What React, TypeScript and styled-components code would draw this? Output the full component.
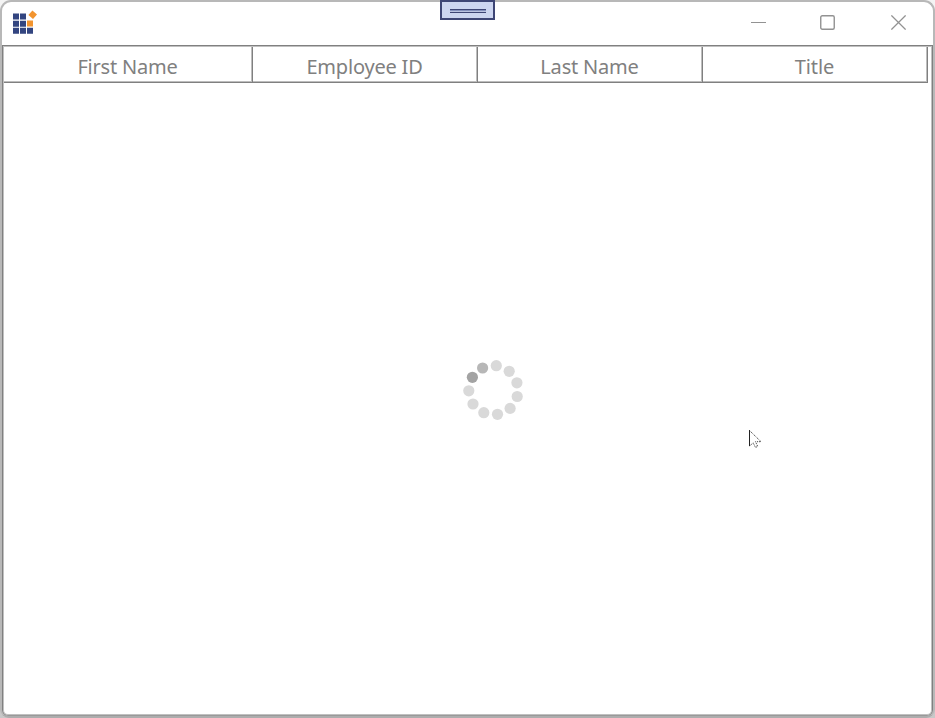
import React from "react";
import styled, { createGlobalStyle } from "styled-components";

const GlobalStyle = createGlobalStyle`
  html, body, #root { height: 100%; margin: 0; }
  body { background: linear-gradient(#f4f4f4, #f0f0f0 20%, #c8c8c8); overflow: hidden; font-family: "Noto Sans", "Open Sans", sans-serif; cursor: default; }
  * { box-sizing: border-box; }
`;

const WindowFrame = styled.main`
  position: relative;
  display: flex;
  flex-direction: column;
  width: 935px;
  height: 718px;
  border: 2px solid #b8b8b8;
  border-bottom-color: #adadad;
  border-radius: 11px 11px 9px 9px;
  background: #fff;
`;

const TitleBar = styled.header`
  display: flex;
  flex: 0 0 43px;
  justify-content: space-between;
`;

const AppIcon = styled.svg`
  width: 40px;
  height: 43px;
`;

const WindowControls = styled.div`
  display: flex;
  margin-right: -1px;
`;

const ControlButton = styled.button<{ $width: number }>`
  width: ${(p) => p.$width}px;
  height: 41px;
  padding: 0;
  border: 0;
  background: transparent;
  color: #929292;
  display: grid;
  place-items: center;

  svg { display: block; fill: none; stroke: currentColor; }
`;

const DebugHandle = styled.div`
  position: absolute;
  top: -2px;
  left: 438px;
  width: 55px;
  height: 20px;
  border: 2px solid #3d4575;
  background: #ccd5f0;
  display: flex;
  justify-content: center;
  padding-top: 7px;
`;

const Grip = styled.div`
  width: 36px;
  height: 4px;
  border-top: 1px solid #3d4575;
  border-bottom: 1px solid #3d4575;
  background: linear-gradient(#8490bd 50%, #bac3e1 50%);
`;

const DataGrid = styled.section`
  flex: 1;
  display: flex;
  flex-direction: column;
  border: 1px solid #808080;
  border-bottom: 1px solid #999;
  border-radius: 0 0 6px 6px;
  box-shadow: inset 0 0 0 1px #c0c0c0;
  padding: 1px;
`;

const HeaderRow = styled.div`
  display: grid;
  grid-template-columns: 249px repeat(3, 225px);
  height: 36px;
`;

const HeaderCell = styled.div`
  display: flex;
  align-items: center;
  justify-content: center;
  padding: 4px 1px 0 0;
  border-right: 1px solid #808080;
  border-bottom: 1px solid #808080;
  box-shadow: inset -1px -1px #bdbdbd;
  color: #808080;
`;

const HeaderLabel = styled.span<{ $spacing: number }>`
  font-size: 20px;
  line-height: 28px;
  letter-spacing: ${(p) => p.$spacing}px;
  white-space: nowrap;
`;

const GridBody = styled.div`
  flex: 1;
  padding: 270px 0 0 452px;
`;

const Spinner = styled.svg`
  display: block;
  width: 74px;
  height: 74px;
`;

const Pointer = styled.svg`
  position: absolute;
  left: 746px;
  top: 427px;
`;

const columns = [
  { label: "First Name", spacing: -0.2 },
  { label: "Employee ID", spacing: -0.2 },
  { label: "Last Name", spacing: -0.2 },
  { label: "Title", spacing: -0.1 },
];

const dots = [
  { x: 40.3, y: 12.7, tone: "#d9d9d9" },
  { x: 53.2, y: 18.3, tone: "#d9d9d9" },
  { x: 60.9, y: 29.8, tone: "#d9d9d9" },
  { x: 61.2, y: 43.5, tone: "#d9d9d9" },
  { x: 54.1, y: 55.4, tone: "#d9d9d9" },
  { x: 41.5, y: 61.3, tone: "#d9d9d9" },
  { x: 27.8, y: 59.7, tone: "#d9d9d9" },
  { x: 17, y: 51, tone: "#d9d9d9" },
  { x: 12.8, y: 37.8, tone: "#d9d9d9" },
  { x: 16.4, y: 24.3, tone: "#a3a3a3" },
  { x: 26.6, y: 15, tone: "#b7b7b7" },
];

export default function App() {
  return (
    <>
      <GlobalStyle />
      <WindowFrame>
        <TitleBar>
          <AppIcon viewBox="2 2 40 43" aria-hidden="true">
            <g fill="#334580">
              <path d="M13 13.5h6v6h-6zM20 13.5h6v6h-6zM13 20.7h6v6h-6zM20 20.7h6v6h-6zM13 27.7h6v6h-6zM20 27.7h6v6h-6zM27 27.7h6v6h-6z" />
            </g>
            <path fill="#f2942f" d="M27 20.5h6v6h-6zM32.4 10.4l4.6 4-4 4.6-4.6-4z" />
          </AppIcon>
          <WindowControls>
            <ControlButton $width={69} aria-label="Minimize">
              <svg width="15" height="15"><path d="M0 7.5h15" /></svg>
            </ControlButton>
            <ControlButton $width={69} aria-label="Maximize">
              <svg width="15" height="15"><rect x=".75" y=".75" width="13.5" height="13.5" rx="1.5" strokeWidth="1.4" /></svg>
            </ControlButton>
            <ControlButton $width={72} aria-label="Close">
              <svg width="15" height="15"><path d="M.4.4l14.2 14.2M14.6.4L.4 14.6" strokeWidth="1.25" /></svg>
            </ControlButton>
          </WindowControls>
        </TitleBar>
        <DataGrid>
          <HeaderRow>
            {columns.map((c) => (
              <HeaderCell key={c.label}>
                <HeaderLabel $spacing={c.spacing}>{c.label}</HeaderLabel>
              </HeaderCell>
            ))}
          </HeaderRow>
          <GridBody>
            <Spinner viewBox="0 0 74 74" role="img" aria-label="Loading">
              {dots.map((d) => (
                <circle key={`${d.x}-${d.y}`} cx={d.x} cy={d.y} r="5.6" fill={d.tone} />
              ))}
            </Spinner>
          </GridBody>
        </DataGrid>
        <DebugHandle><Grip /></DebugHandle>
        <Pointer width="16" height="21" aria-hidden="true">
          <path d="M1.5 1.5V17l3.8-3 2.2 4.5 2.2-1.1-2.2-4.4h5.2z" fill="#fff" />
          <path d="M1.5 1v16" stroke="#222" fill="none" />
          <path d="M1.5 1.5L13 12.7H7.5l2.2 4.7-2.2 1.1-2.3-4.6L1.5 17" fill="none" stroke="#333" strokeWidth=".9" strokeDasharray="1.2 .9" />
        </Pointer>
      </WindowFrame>
    </>
  );
}
